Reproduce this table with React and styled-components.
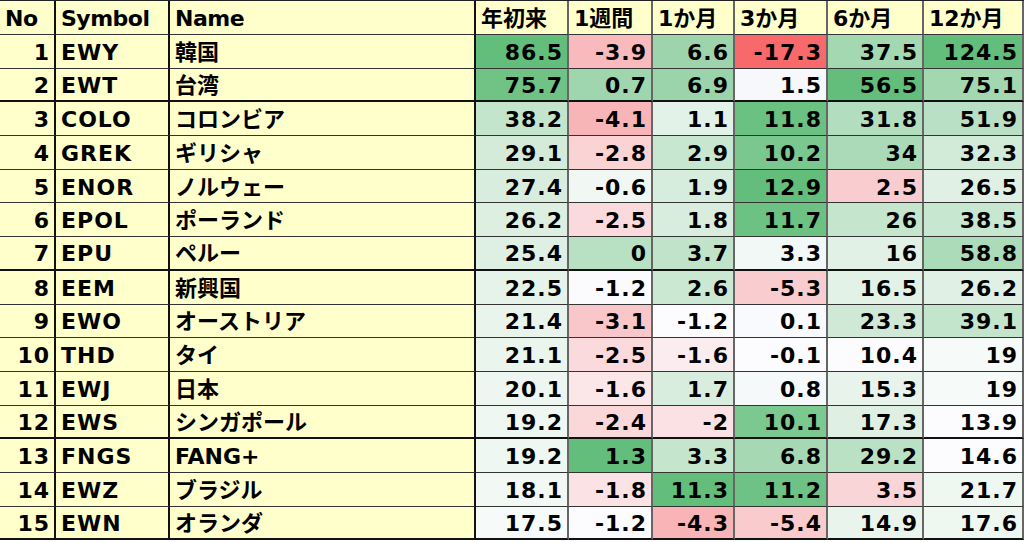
import styled, {createGlobalStyle} from 'styled-components'

const GlobalStyle = createGlobalStyle`
  body {
    margin: 0;
    background: #ffffff;
  }
`;

const Sheet = styled.div`
  display: grid;
  grid-template-columns: 56px 114px 306px 93px 84px 82px 93px 96px 100px;
  grid-template-rows: 34px repeat(15, 33.7px);
  width: 1024px;
  border-top: 1px solid #222;
  box-sizing: border-box;
  font-family: "DejaVu Sans", "Noto Sans CJK JP", sans-serif;
  font-weight: bold;
  font-size: 22px;
  color: #000;
`;

const Cell = styled.div`
  box-sizing: border-box;
  display: flex;
  align-items: center;
  justify-content: ${p => (p.$right ? 'flex-end' : 'flex-start')};
  padding: 3px 4px 0 5px;
  line-height: 1;
  background: ${p => p.$bg || '#ffffcc'};
  border-bottom: ${p => (p.$thick ? '2px solid #111' : '1px solid #333')};
  border-right: ${p => (p.$strong ? '2px solid #111' : '2px solid #666')};
  white-space: nowrap;
  overflow: hidden;
`;

const Num = styled.span`
  display: block;
  letter-spacing: ${p => (p.$tight ? '-0.5px' : '1px')};
`;

const JP = styled.span`
  display: block;
  font-family: "DejaVu Sans", "Noto Sans CJK JP", sans-serif;
  font-size: 22px;
  line-height: 1;
`;

const headers = ['No', 'Symbol', 'Name', '年初来', '1週間', '1か月', '3か月', '6か月', '12か月'];

// [値, 背景色] の順
const rows = [
  [1, 'EWY', '韓国', ['86.5', '#63BE7B'], ['-3.9', '#F8BABC'], ['6.6', '#9DD4AB'], ['-17.3', '#F8696B'], ['37.5', '#A4D8B1'], ['124.5', '#63BE7B']],
  [2, 'EWT', '台湾', ['75.7', '#70C385'], ['0.7', '#A0D6AE'], ['6.9', '#9BD3AA'], ['1.5', '#F6F8FB'], ['56.5', '#63BE7B'], ['75.1', '#A2D7AF']],
  [3, 'COLO', 'コロンビア', ['38.2', '#C3E5CC'], ['-4.1', '#F8B5B7'], ['1.1', '#E3F2E8'], ['11.8', '#6BC182'], ['31.8', '#B2DDBE'], ['51.9', '#B9E0C4']],
  [4, 'GREK', 'ギリシャ', ['29.1', '#D4EBDA'], ['-2.8', '#FAD3D5'], ['2.9', '#C8E7D0'], ['10.2', '#7AC88F'], ['34', '#AADAB7'], ['32.3', '#D2EAD8']],
  [5, 'ENOR', 'ノルウェー', ['27.4', '#D9EDDF'], ['-0.6', '#F1F8F4'], ['1.9', '#D6ECDC'], ['12.9', '#63BE7B'], ['2.5', '#F9CDD0'], ['26.5', '#E0F0E4']],
  [6, 'EPOL', 'ポーランド', ['26.2', '#DCEFE1'], ['-2.5', '#FADADC'], ['1.8', '#D8EDDE'], ['11.7', '#6CC283'], ['26', '#C5E6CD'], ['38.5', '#C8E7D0']],
  [7, 'EPU', 'ペルー', ['25.4', '#DEF0E3'], ['0', '#B8E0C3'], ['3.7', '#C0E3C9'], ['3.3', '#F2F8F5'], ['16', '#E2F1E6'], ['58.8', '#ACDBB9']],
  [8, 'EEM', '新興国', ['22.5', '#E6F3EA'], ['-1.2', '#FBFBFE'], ['2.6', '#CBE8D3'], ['-5.3', '#F9CDCF'], ['16.5', '#E3F2E7'], ['26.2', '#E1F0E5']],
  [9, 'EWO', 'オーストリア', ['21.4', '#E9F5EC'], ['-3.1', '#F9C7C9'], ['-1.2', '#FCFCFF'], ['0.1', '#F9FAFD'], ['23.3', '#CFE9D6'], ['39.1', '#C3E5CC']],
  [10, 'THD', 'タイ', ['21.1', '#EAF5ED'], ['-2.5', '#FADADC'], ['-1.6', '#FBEDEF'], ['-0.1', '#FCFCFF'], ['10.4', '#FCFCFF'], ['19', '#F6FAF8']],
  [11, 'EWJ', '日本', ['20.1', '#EDF6F0'], ['-1.6', '#FBE6E8'], ['1.7', '#D8EDDE'], ['0.8', '#F5F9FA'], ['15.3', '#E8F4EB'], ['19', '#F6FAF8']],
  [12, 'EWS', 'シンガポール', ['19.2', '#EFF7F2'], ['-2.4', '#FAD8DA'], ['-2', '#FBE1E3'], ['10.1', '#7BC990'], ['17.3', '#DFF0E3'], ['13.9', '#FCFCFF']],
  [13, 'FNGS', 'FANG+', ['19.2', '#EFF7F2'], ['1.3', '#63BE7B'], ['3.3', '#C5E6CD'], ['6.8', '#A6D9B3'], ['29.2', '#BBE1C5'], ['14.6', '#FCFCFF']],
  [14, 'EWZ', 'ブラジル', ['18.1', '#F2F9F4'], ['-1.8', '#FBE3E5'], ['11.3', '#63BE7B'], ['11.2', '#6EC285'], ['3.5', '#FAD5D8'], ['21.7', '#EFF7F1']],
  [15, 'EWN', 'オランダ', ['17.5', '#F6FAF8'], ['-1.2', '#FCFCFF'], ['-4.3', '#F8B4B6'], ['-5.4', '#F9CBCD'], ['14.9', '#E9F5EC'], ['17.6', '#EFF7F1']],
];

const groupEnds = [2, 7, 12, 15];

export default function App() {
  return (
    <>
      <GlobalStyle />
      <Sheet>
        {headers.map((h, i) => (
          <Cell key={h} $strong={i < 3}>
            {/[ぁ-んァ-ン一-龥]/.test(h) ? <JP>{h}</JP> : <Num $tight>{h}</Num>}
          </Cell>
        ))}
        {rows.map(([no, sym, name, ...vals]) => {
          const thick = groupEnds.includes(no);
          return [
            <Cell key={no + 'n'} $right $strong $thick={thick}><Num>{no}</Num></Cell>,
            <Cell key={no + 's'} $strong $thick={thick}><Num>{sym}</Num></Cell>,
            <Cell key={no + 'm'} $strong $thick={thick}><JP>{name}</JP></Cell>,
            ...vals.map(([v, bg], i) => (
              <Cell key={no + 'v' + i} $right $bg={bg} $thick={thick}>
                <Num>{v}</Num>
              </Cell>
            )),
          ];
        })}
      </Sheet>
    </>
  );
}
